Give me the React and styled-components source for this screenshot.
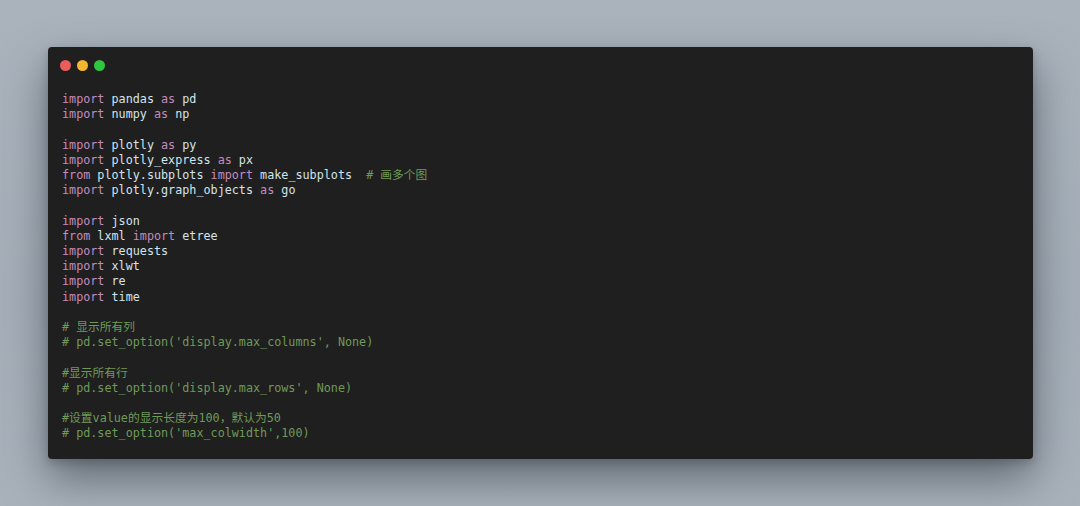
import React from 'react';
import styled, { createGlobalStyle } from 'styled-components';

const GlobalStyle = createGlobalStyle`
  html, body {
    margin: 0;
    padding: 0;
  }
  body {
    background: linear-gradient(180deg, #aab3bc 0%, #a5aeb8 60%, #a9b2bb 100%);
    width: 1080px;
    height: 506px;
    overflow: hidden;
  }
`;

const Page = styled.div`
  box-sizing: border-box;
  width: 1080px;
  height: 506px;
  padding: 47px 47px 0 48px;
`;

const Window = styled.div`
  box-sizing: border-box;
  height: 412px;
  background: #1f1f1f;
  border-radius: 4px;
  box-shadow: 0 20px 44px rgba(40, 48, 58, 0.55), 0 4px 10px rgba(0, 0, 0, 0.2);
  padding: 12px 14px 0 14px;
`;

const TitleBar = styled.div`
  display: flex;
  gap: 6px;
  margin-left: -2px;
  height: 12px;
  align-items: center;
`;

const Dot = styled.span`
  width: 11px;
  height: 11px;
  border-radius: 50%;
  background: ${(props) => props.color};
`;

const Code = styled.pre`
  margin: 21px 0 0 0;
  font-family: "DejaVu Sans Mono", "Noto Sans CJK SC", monospace;
  font-size: 11.75px;
  line-height: 15.2px;
  color: #d3e4ec;
  white-space: pre;
`;

const Kw = styled.span`
  color: #c58bbd;
`;

const Comment = styled.span`
  color: #6f9a59;
`;

const lines = [
  [['kw', 'import'], ['n', ' pandas '], ['kw', 'as'], ['n', ' pd']],
  [['kw', 'import'], ['n', ' numpy '], ['kw', 'as'], ['n', ' np']],
  [],
  [['kw', 'import'], ['n', ' plotly '], ['kw', 'as'], ['n', ' py']],
  [['kw', 'import'], ['n', ' plotly_express '], ['kw', 'as'], ['n', ' px']],
  [['kw', 'from'], ['n', ' plotly.subplots '], ['kw', 'import'], ['n', ' make_subplots  '], ['c', '# 画多个图']],
  [['kw', 'import'], ['n', ' plotly.graph_objects '], ['kw', 'as'], ['n', ' go']],
  [],
  [['kw', 'import'], ['n', ' json']],
  [['kw', 'from'], ['n', ' lxml '], ['kw', 'import'], ['n', ' etree']],
  [['kw', 'import'], ['n', ' requests']],
  [['kw', 'import'], ['n', ' xlwt']],
  [['kw', 'import'], ['n', ' re']],
  [['kw', 'import'], ['n', ' time']],
  [],
  [['c', '# 显示所有列']],
  [['c', "# pd.set_option('display.max_columns', None)"]],
  [],
  [['c', '#显示所有行']],
  [['c', "# pd.set_option('display.max_rows', None)"]],
  [],
  [['c', '#设置value的显示长度为100，默认为50']],
  [['c', "# pd.set_option('max_colwidth',100)"]],
];

const renderToken = ([type, text], i) => {
  if (type === 'kw') return <Kw key={i}>{text}</Kw>;
  if (type === 'c') return <Comment key={i}>{text}</Comment>;
  return <span key={i}>{text}</span>;
};

const App = () => {
  return (
    <Page>
      <GlobalStyle />
      <Window>
        <TitleBar>
          <Dot color="#ee5b5b" />
          <Dot color="#f5b731" />
          <Dot color="#2ec53f" />
        </TitleBar>
        <Code>
          {lines.map((line, i) => (
            <div key={i}>{line.length ? line.map(renderToken) : ' '}</div>
          ))}
        </Code>
      </Window>
    </Page>
  );
};

export default App;
